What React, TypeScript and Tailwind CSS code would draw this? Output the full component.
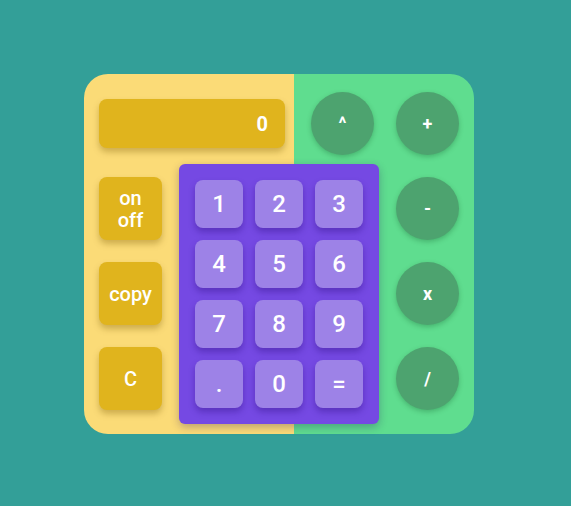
const digits = ["1", "2", "3", "4", "5", "6", "7", "8", "9", ".", "0", "="];

function SideKey({ children }: { children: React.ReactNode }) {
  return (
    <button
      type="button"
      className="flex h-[63px] w-[63px] items-center justify-center rounded-lg bg-[#e0b41d] text-[20px] font-medium leading-[22px] text-white shadow-[0_4px_6px_rgba(120,90,0,0.35)]"
    >
      {children}
    </button>
  );
}

function OpKey({ label }: { label: string }) {
  return (
    <button
      type="button"
      className="flex h-[63px] w-[63px] items-center justify-center rounded-full bg-[#4da36f] text-[18px] font-bold text-white shadow-[0_2px_5px_rgba(0,60,20,0.25)]"
    >
      {label}
    </button>
  );
}

export default function App() {
  return (
    <div
      className="min-h-screen bg-[#339f98] pl-[84px] pt-[74px]"
      style={{ fontFamily: "Roboto, 'Noto Sans', sans-serif" }}
    >
      <div className="flex w-[390px] flex-col gap-[9px] rounded-[24px] bg-[linear-gradient(to_right,#fbdb77_210px,#5fdd8f_210px)] px-[15px] pb-[10px] pt-[18px]">
        <div className="flex items-center">
          <div className="flex h-[49px] w-[186px] items-center justify-end rounded-lg bg-[#e0b41d] pr-[17px] text-[20px] font-bold text-white shadow-[0_4px_6px_rgba(120,90,0,0.35)]">
            0
          </div>
          <div className="ml-[26px]">
            <OpKey label="^" />
          </div>
          <div className="ml-[22px]">
            <OpKey label="+" />
          </div>
        </div>
        <div className="flex items-start gap-[17px]">
          <div className="mt-[13px] flex flex-col gap-[22px]">
            <SideKey>
              <span className="text-center">
                on
                <br />
                off
              </span>
            </SideKey>
            <SideKey>copy</SideKey>
            <SideKey>C</SideKey>
          </div>
          <div className="grid h-[260px] w-[200px] grid-cols-3 gap-3 rounded-md bg-[#7549e3] p-4 shadow-[0_3px_8px_rgba(40,20,100,0.3)]">
            {digits.map((d) => (
              <button
                key={d}
                type="button"
                className="flex h-12 w-12 items-center justify-center rounded-lg bg-[#9d82e7] text-[24px] font-medium text-white shadow-[0_4px_6px_rgba(40,10,120,0.35)]"
              >
                {d}
              </button>
            ))}
          </div>
          <div className="mt-[13px] flex flex-col gap-[22px]">
            <OpKey label="-" />
            <OpKey label="x" />
            <OpKey label="/" />
          </div>
        </div>
      </div>
    </div>
  );
}
